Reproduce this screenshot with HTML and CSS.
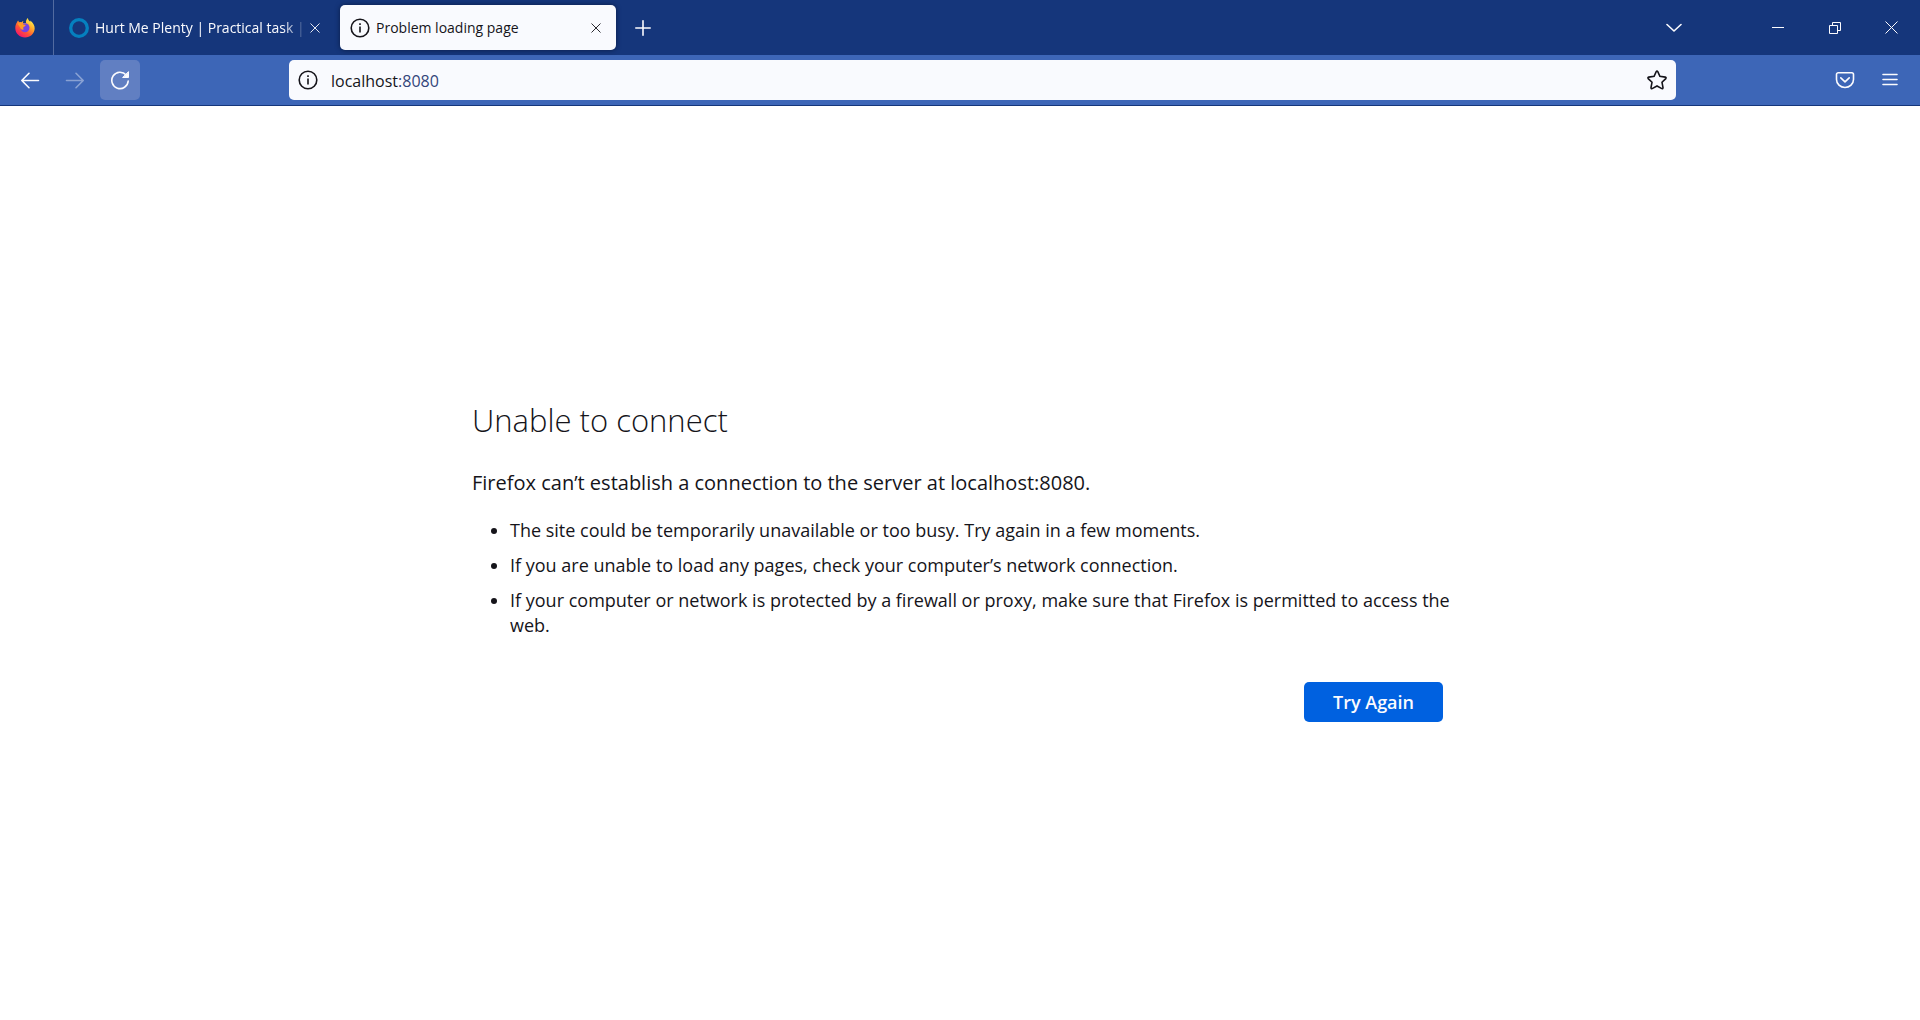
FILE: index.html
```html
<!DOCTYPE html>
<html lang="en">
<head>
<meta charset="utf-8">
<meta name="viewport" content="width=device-width, initial-scale=1">
<title>Problem loading page</title>
<link rel="stylesheet" href="styles.css">
</head>
<body>
<header class="browser">
  <div class="titlebar">
    <div class="brand">
      <svg width="20" height="20" viewBox="0 0 20 20" aria-hidden="true">
        <defs>
          <linearGradient id="flame" x1="0.85" y1="0.1" x2="0.25" y2="0.95">
            <stop offset="0" stop-color="#fff44f"/>
            <stop offset="0.35" stop-color="#ffa82a"/>
            <stop offset="0.65" stop-color="#ff5634"/>
            <stop offset="1" stop-color="#f5156c"/>
          </linearGradient>
        </defs>
        <path fill="url(#flame)" d="M2 4.200C2.200 3.400 2.700 2.800 3.200 2.500C3.300 3.300 3.800 4 4.400 4.300C5.300 4 6 4.100 6.700 4.200C7.200 3.500 7.900 3.100 8.500 3C8.100 3.600 7.900 4.300 8 4.900H11C10.600 3 11.500 1.100 12.900 0C13 1.800 14.300 2.700 15.200 3.800C15.400 3.300 15.400 2.900 15.300 2.400C18 4.500 19.800 7.300 19.700 10.600C19.500 15.600 15.300 19.600 10 19.600C4.600 19.600.4 15.500.3 10.300C.2 7.900.9 5.900 2 4.200Z"/>
        <circle cx="10" cy="9.800" r="4.500" fill="#7542e5"/>
        <path fill="#ff9a26" d="M2.500 5.500C5 4.500 7.500 5 8.200 6.300C8.900 7 10.200 6.800 10.700 7C10.400 8.300 9.200 8.500 8.400 9.200C7.900 9.800 8.300 10.800 9 11.300C7.200 12.300 5.400 11 4.800 9Z"/>
      </svg>
    </div>
    <div class="tabs" role="tablist">
      <div class="tab" role="tab">
        <svg width="20" height="20" viewBox="0 0 20 20" aria-hidden="true"><circle cx="10" cy="10" r="8.300" fill="none" stroke="#0580bf" stroke-width="3.300"/></svg>
        <span class="tab-label tab-label-faded">Hurt Me Plenty | Practical task | C</span>
        <button class="tab-close" aria-label="Close tab"><svg width="10" height="10" viewBox="0 0 10 10"><path d="M.5.5l9 9M9.500.5l-9 9"/></svg></button>
      </div>
      <div class="tab tab-active" role="tab" aria-selected="true">
        <svg class="info" width="20" height="20" viewBox="0 0 20 20" aria-hidden="true"><circle cx="10" cy="10" r="8.800"/><path d="M10 8.500v6M10 5.300v1.700"/></svg>
        <span class="tab-label">Problem loading page</span>
        <button class="tab-close" aria-label="Close tab"><svg width="10" height="10" viewBox="0 0 10 10"><path d="M.5.5l9 9M9.500.5l-9 9"/></svg></button>
      </div>
      <button class="tool" aria-label="New tab"><svg width="16" height="16" viewBox="0 0 16 16"><path d="M8 .8v14.400M.8 8h14.400"/></svg></button>
    </div>
    <button class="tool list-tabs" aria-label="List all tabs"><svg width="16" height="10" viewBox="0 0 16 10"><path d="M1 1.500l7 6.500 7-6.500"/></svg></button>
    <div class="window-buttons">
      <button aria-label="Minimize"><svg width="12" height="12" viewBox="0 0 12 12"><path d="M0 5.500h12"/></svg></button>
      <button aria-label="Restore"><svg width="12" height="12" viewBox="0 0 12 12"><path d="M.5 3.500h8v8h-8zM3.500 3.500v-3h8v8h-3"/></svg></button>
      <button aria-label="Close"><svg width="13" height="13" viewBox="0 0 13 13"><path d="M.5.5l12 12M12.500.5l-12 12"/></svg></button>
    </div>
  </div>
  <div class="toolbar">
    <div class="tools">
      <button class="tool" aria-label="Back"><svg width="20" height="20" viewBox="0 0 20 20"><path d="M18.500 10.500H2M9 3.300L1.800 10.500 9 17.700"/></svg></button>
      <button class="tool" aria-label="Forward" disabled><svg width="20" height="20" viewBox="0 0 20 20"><path d="M1.500 10.500H18M11 3.300l7.200 7.200-7.200 7.200"/></svg></button>
      <button class="tool tool-hover" aria-label="Reload"><svg width="20" height="20" viewBox="0 0 20 20"><path d="M16.200 5A8.200 8.200 0 1 0 18.200 11"/><path class="solid" d="M18.500 2v5.500h-5.500z"/></svg></button>
    </div>
    <div class="urlbar">
      <svg class="info" width="20" height="20" viewBox="0 0 20 20" aria-hidden="true"><circle cx="10" cy="10" r="8.800"/><path d="M10 8.500v6M10 5.300v1.700"/></svg>
      <div class="address" role="textbox" contenteditable="true" aria-label="Address" spellcheck="false">localhost<span class="port">:8080</span></div>
      <button class="bookmark" aria-label="Bookmark this page"><svg width="20" height="20" viewBox="0 0 20 20"><path d="M9.200 1.600Q10 .4 10.800 1.600L12.900 6.300 18.300 7.100Q19.600 7.500 18.800 8.600L15 12.300 16 17.600Q16 19 14.800 18.600L10 16 5.200 18.600Q4 19 4 17.600L5 12.300 1.200 8.600Q.4 7.500 1.700 7.100L7.100 6.300Z"/></svg></button>
    </div>
    <div class="tools">
      <button class="tool" aria-label="Save to Pocket"><svg width="20" height="20" viewBox="0 0 20 20"><path d="M3.200 2.800h13.600a1.700 1.700 0 0 1 1.700 1.700V9.500a8.500 8 0 0 1-17 0V4.500a1.700 1.700 0 0 1 1.700-1.700zM5.800 7.800L10 11.800l4.200-4"/></svg></button>
      <button class="tool" aria-label="Open application menu"><svg width="16" height="16" viewBox="0 0 16 16"><path d="M1 2.500h14M1 7.500h14M1 12.500h14"/></svg></button>
    </div>
  </div>
</header>
<main class="error-page">
  <section class="error">
    <h1>Unable to connect</h1>
    <p>Firefox can’t establish a connection to the server at localhost:8080.</p>
    <ul>
      <li>The site could be temporarily unavailable or too busy. Try again in a few moments.</li>
      <li>If you are unable to load any pages, check your computer’s network connection.</li>
      <li>If your computer or network is protected by a firewall or proxy, make sure that Firefox is permitted to access the web.</li>
    </ul>
    <button class="retry">Try Again</button>
  </section>
</main>
</body>
</html>
```
FILE: styles.css
```css
* {
  box-sizing: border-box;
}

body {
  margin: 0;
  min-height: 100vh;
  display: flex;
  flex-direction: column;
  background: #fff;
  color: #15141a;
  font-family: "Open Sans", "Noto Sans", sans-serif;
}

button {
  display: flex;
  align-items: center;
  justify-content: center;
  padding: 0;
  border: 0;
  background: none;
  color: inherit;
  font: inherit;
}

svg {
  flex: none;
}

button svg,
.info {
  fill: none;
  stroke: currentColor;
}

.info {
  stroke-width: 1.6;
}

.browser {
  color: #fbfbfe;
  font-size: 14px;
}

.titlebar {
  display: flex;
  align-items: center;
  height: 55px;
  background: #15367b;
}

.brand {
  display: flex;
  align-items: center;
  align-self: stretch;
  width: 54px;
  padding-left: 15px;
  border-right: 1px solid #526ba0;
}

.tabs {
  display: flex;
  align-items: center;
  flex: 1;
  gap: 5px;
}

.tab {
  display: flex;
  align-items: center;
  width: 276px;
  height: 45px;
  padding: 0 12px 0 10px;
  border-radius: 5px;
}

.tab:first-child {
  margin-left: 5px;
}

.tab-active {
  margin-right: 2px;
  background: #f9fafe;
  color: #15141a;
  box-shadow: 0 0 5px #0a1c45;
}

.tab-label {
  flex: 1;
  margin-left: 6px;
  overflow: hidden;
  white-space: nowrap;
}

.tab-label-faded {
  -webkit-mask-image: linear-gradient(to left, transparent, #000 24px);
  mask-image: linear-gradient(to left, transparent, #000 24px);
}

.tab-close {
  width: 16px;
  height: 30px;
  opacity: 0.9;
}

.tool {
  width: 40px;
  height: 40px;
  border-radius: 5px;
}

.tool svg {
  stroke-width: 1.6;
  stroke-linecap: round;
  stroke-linejoin: round;
}

.tool .solid {
  fill: currentColor;
  stroke-width: 1;
}

.tool:disabled {
  opacity: 0.4;
}

.tool-hover {
  background: #617fc2;
}

.list-tabs {
  margin-right: 55px;
}

.window-buttons {
  display: flex;
}

.window-buttons button {
  width: 57px;
  height: 54px;
}

.toolbar {
  display: flex;
  align-items: center;
  justify-content: space-between;
  height: 51px;
  padding: 0 10px;
  background: #3d66b7;
  border-bottom: 1px solid #15367b;
}

.tools {
  display: flex;
  gap: 5px;
}

.urlbar {
  display: flex;
  align-items: center;
  flex: 1;
  height: 40px;
  margin: 0 149px;
  padding: 0 9px;
  border-radius: 5px;
  background: #f9fafe;
  color: #15141a;
  font-size: 16px;
}

.address {
  flex: 1;
  margin-left: 13px;
  padding-top: 2px;
}

.port {
  color: #33457a;
}

.bookmark svg {
  stroke-width: 1.6;
}

.error-page {
  display: flex;
  flex: 1;
  align-items: center;
  justify-content: center;
  padding: 0 48px 8px 56px;
}

.error {
  display: flex;
  flex-direction: column;
  width: 100%;
  max-width: 984px;
}

h1 {
  margin: 0 0 24px;
  font-size: 31px;
  font-weight: 300;
  line-height: 48px;
}

p {
  margin: 0 0 20px;
  font-size: 20px;
  line-height: 30px;
}

ul {
  display: flex;
  flex-direction: column;
  gap: 10px;
  margin: 0;
  padding-left: 38px;
  font-size: 18px;
  line-height: 25px;
}

.retry {
  align-self: flex-end;
  min-width: 139px;
  height: 40px;
  margin: 44px 13px 0 0;
  border-radius: 5px;
  background: #0061e0;
  color: #fbfbfe;
  font-size: 18px;
  font-weight: 600;
}
```
